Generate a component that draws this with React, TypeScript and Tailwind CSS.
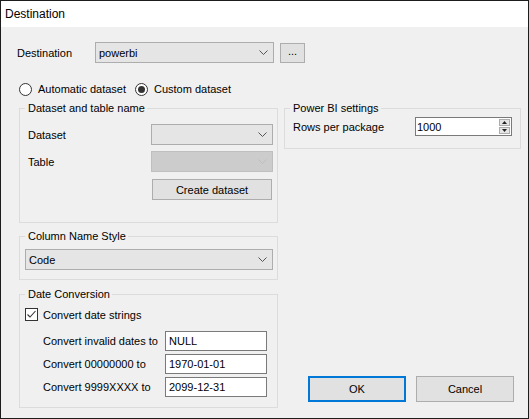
import type { ReactNode } from "react";

function Chevron({ color = "#444" }: { color?: string }) {
  return (
    <svg width="9" height="5" viewBox="0 0 9 5" className="shrink-0">
      <polyline points="0.5,0.5 4.5,4.5 8.5,0.5" fill="none" stroke={color} strokeWidth="1" />
    </svg>
  );
}

function Combo({
  value,
  className,
  disabled,
}: {
  value?: string;
  className: string;
  disabled?: boolean;
}) {
  return (
    <div
      className={`h-[21px] border flex items-center justify-between pl-[3px] pr-[5px] ${
        disabled ? "bg-[#cccccc] border-[#bfbfbf]" : "bg-[#e5e5e5] border-[#adadad]"
      } ${className}`}
    >
      <span>{value}</span>
      <Chevron color={disabled ? "#bdbdbd" : "#555"} />
    </div>
  );
}

function Group({
  title,
  className,
  children,
}: {
  title: string;
  className: string;
  children: ReactNode;
}) {
  return (
    <fieldset className={`border border-[#dcdcdc] ${className}`}>
      <legend className="ml-[5px] pl-[3px] pr-[2px] leading-[14px]">{title}</legend>
      {children}
    </fieldset>
  );
}

function Radio({ checked, label }: { checked?: boolean; label: string }) {
  return (
    <div className="flex items-center whitespace-nowrap">
      <div className="w-[13px] h-[13px] rounded-full border border-[#333] bg-white flex items-center justify-center">
        {checked && <div className="w-[7px] h-[7px] rounded-full bg-[#333]" />}
      </div>
      <span className="ml-[6px]">{label}</span>
    </div>
  );
}

function TextRow({ label, value }: { label: string; value: string }) {
  return (
    <div className="flex items-center pl-[18px]">
      <span className="w-[122px] whitespace-nowrap">{label}</span>
      <div className="w-[102px] h-[20px] bg-white border border-[#7a7a7a] flex items-center pl-[3px]">
        {value}
      </div>
    </div>
  );
}

export default function App() {
  return (
    <div className="w-[529px] h-[419px] border border-[#1c1c1c] bg-[#f0f0f0] flex flex-col text-[11px] leading-[14px] text-black font-['Liberation_Sans',Arial,sans-serif]">
      <div className="h-[26px] bg-white flex items-center pl-[4px] text-[12px]">Destination</div>

      <div className="flex-1 pl-[16px] pt-[15px]">
        <div className="flex items-center h-[21px]">
          <span className="w-[78px]">Destination</span>
          <Combo value="powerbi" className="w-[179px]" />
          <div className="ml-[6px] w-[25px] h-[20px] bg-[#e1e1e1] border border-[#adadad] flex items-center justify-center leading-none pb-[2px]">
            ...
          </div>
        </div>

        <div className="flex items-center mt-[19px] pl-[2px] h-[14px]">
          <div className="w-[116px]">
            <Radio label="Automatic dataset" />
          </div>
          <Radio checked label="Custom dataset" />
        </div>

        <div className="flex mt-[5px] pl-[2px] gap-[6px]">
          <div className="w-[259px] flex flex-col">
            <Group title="Dataset and table name" className="h-[122px]">
              <div className="pl-[8px] pr-[4px] pt-[9px]">
                <div className="flex items-center">
                  <span className="w-[123px]">Dataset</span>
                  <Combo className="w-[122px]" />
                </div>
                <div className="flex items-center mt-[6px]">
                  <span className="w-[123px]">Table</span>
                  <Combo disabled className="w-[122px]" />
                </div>
                <div className="mt-[7px] pl-[124px]">
                  <div className="w-[120px] h-[21px] bg-[#e1e1e1] border border-[#adadad] flex items-center justify-center">
                    Create dataset
                  </div>
                </div>
              </div>
            </Group>

            <Group title="Column Name Style" className="h-[51px] mt-[6px]">
              <div className="pl-[5px] pr-[4px] pt-[6px]">
                <Combo value="Code" className="w-full" />
              </div>
            </Group>

            <Group title="Date Conversion" className="h-[121px] mt-[7px]">
              <div className="pl-[5px] pt-[7px]">
                <div className="flex items-center h-[13px]">
                  <div className="w-[13px] h-[13px] border border-[#333] bg-white flex items-center justify-center">
                    <svg width="11" height="11" viewBox="0 0 11 11">
                      <polyline points="1.5,5.5 4,8 9.5,2" fill="none" stroke="#333" strokeWidth="1.1" />
                    </svg>
                  </div>
                  <span className="ml-[5px]">Convert date strings</span>
                </div>
                <div className="mt-[10px] flex flex-col gap-[3px]">
                  <TextRow label="Convert invalid dates to" value="NULL" />
                  <TextRow label="Convert 00000000 to" value="1970-01-01" />
                  <TextRow label="Convert 9999XXXX to" value="2099-12-31" />
                </div>
              </div>
            </Group>
          </div>

          <div className="w-[237px] flex flex-col">
            <Group title="Power BI settings" className="h-[48px]">
              <div className="pl-[8px] pr-[8px] pt-[2px] flex items-center justify-between">
                <span>Rows per package</span>
                <div className="w-[97px] h-[19px] bg-white border border-[#7a7a7a] flex items-stretch">
                  <span className="flex-1 pl-[1px] flex items-center">1000</span>
                  <div className="w-[13px] flex flex-col gap-[1px] p-[1px]">
                    <div className="flex-1 bg-[#e5e5e5] border border-[#acacac] flex items-center justify-center">
                      <svg width="5" height="3" viewBox="0 0 5 3">
                        <polygon points="2.5,0 5,3 0,3" fill="#222" />
                      </svg>
                    </div>
                    <div className="flex-1 bg-[#e5e5e5] border border-[#acacac] flex items-center justify-center">
                      <svg width="5" height="3" viewBox="0 0 5 3">
                        <polygon points="0,0 5,0 2.5,3" fill="#222" />
                      </svg>
                    </div>
                  </div>
                </div>
              </div>
            </Group>

            <div className="mt-auto pb-[6px] pr-[7px] flex justify-end gap-[10px]">
              <div className="w-[98px] h-[26px] bg-[#e1e1e1] border-2 border-[#0078d7] flex items-center justify-center">
                OK
              </div>
              <div className="w-[98px] h-[26px] bg-[#e1e1e1] border border-[#adadad] flex items-center justify-center">
                Cancel
              </div>
            </div>
          </div>
        </div>
      </div>
    </div>
  );
}
